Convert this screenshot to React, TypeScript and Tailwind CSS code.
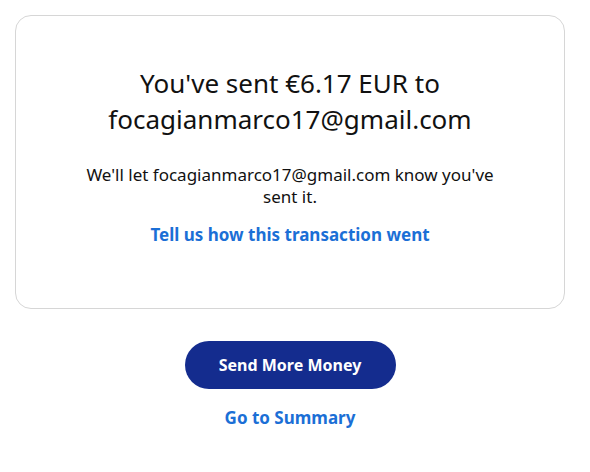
export default function App() {
  return (
    <div className="w-[590px] h-[472px] bg-white" style={{ fontFamily: "'Noto Sans', sans-serif" }}>
      <div className="pt-[15px] px-[15px]">
        <div className="w-[550px] h-[294px] rounded-[16px] border border-[#d6d6d6] flex flex-col items-center pt-[49px]">
          <h1 className="text-[26px] leading-[36px] text-[#111] text-center font-normal">
            You've sent €6.17 EUR to
            <br />
            focagianmarco17@gmail.com
          </h1>
          <p className="mt-[27px] w-[420px] text-[17px] leading-[22px] text-[#111] text-center">
            We'll let focagianmarco17@gmail.com know you've sent it.
          </p>
          <a className="mt-[15px] text-[17px] font-bold text-[#1b6fd6] leading-[24px]">Tell us how this transaction went</a>
        </div>
      </div>
      <div className="px-[15px]">
        <div className="w-[550px] flex flex-col items-center mt-[32px]">
          <button className="w-[211px] h-[48px] rounded-full bg-[#142c8e] text-white font-bold text-[16px]">Send More Money</button>
          <a className="mt-[17px] text-[17px] font-bold text-[#1b6fd6] leading-[24px]">Go to Summary</a>
        </div>
      </div>
    </div>
  );
}
